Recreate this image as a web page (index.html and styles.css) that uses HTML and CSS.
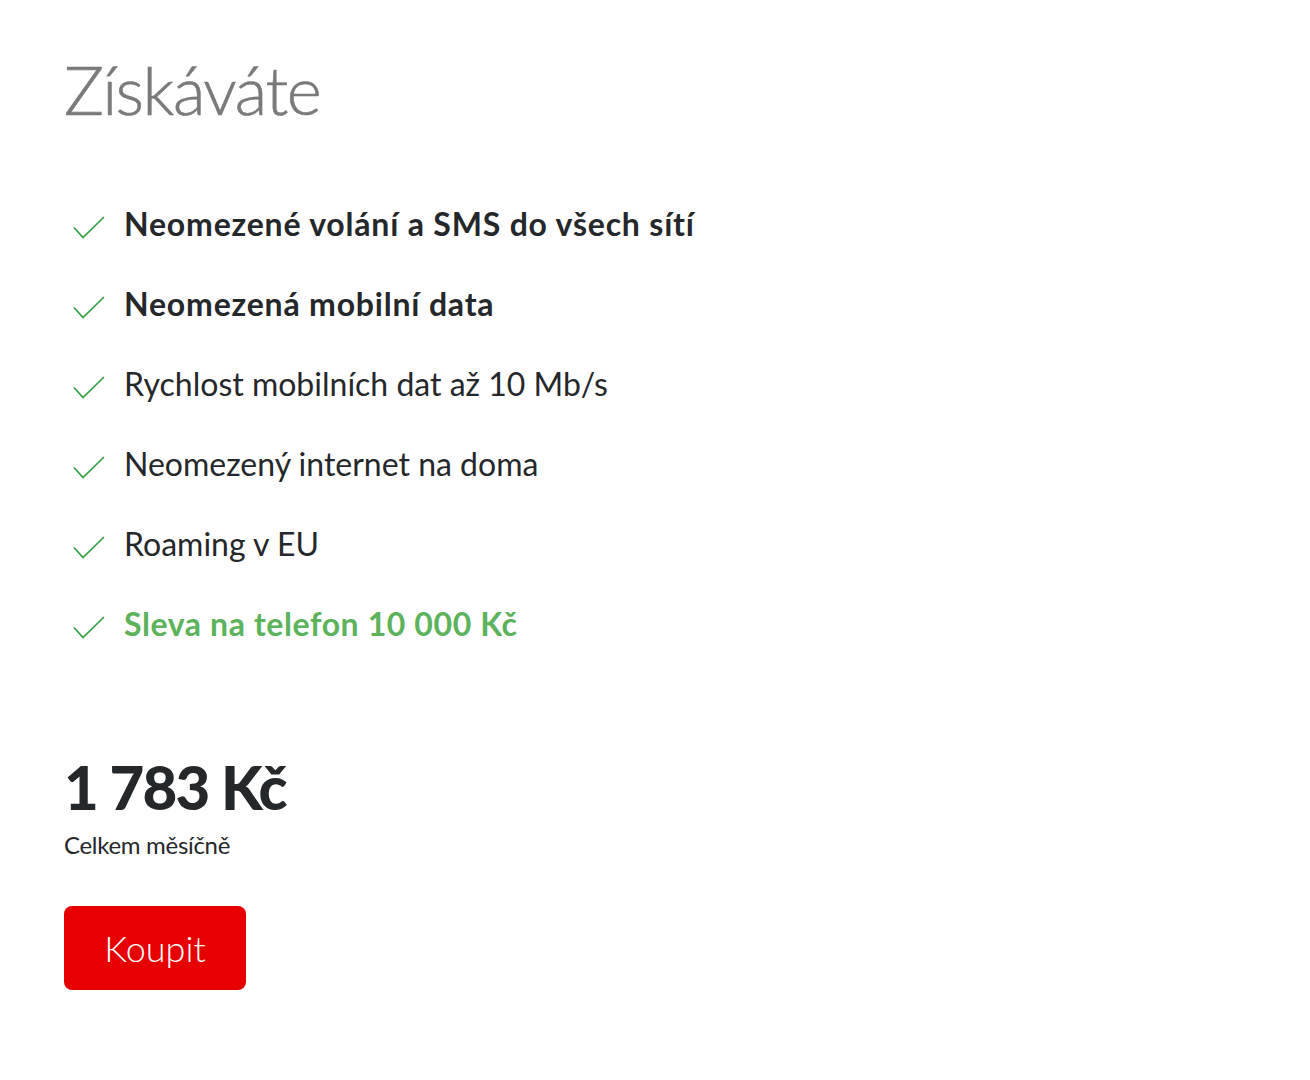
FILE: index.html
```html
<!DOCTYPE html>
<html lang="cs">
<head>
<meta charset="utf-8">
<title>Získáváte</title>
<link rel="stylesheet" href="styles.css">
</head>
<body>
<section class="offer">
  <h1 class="offer-title">Získáváte</h1>
  <ul class="benefits">
    <li class="benefit benefit-strong">
      <svg class="check" viewBox="0 0 32 24" width="32" height="24" aria-hidden="true"><polyline points="1,11.5 10,21.5 31,1" /></svg>
      <span>Neomezené volání a SMS do všech sítí</span>
    </li>
    <li class="benefit benefit-strong">
      <svg class="check" viewBox="0 0 32 24" width="32" height="24" aria-hidden="true"><polyline points="1,11.5 10,21.5 31,1" /></svg>
      <span>Neomezená mobilní data</span>
    </li>
    <li class="benefit">
      <svg class="check" viewBox="0 0 32 24" width="32" height="24" aria-hidden="true"><polyline points="1,11.5 10,21.5 31,1" /></svg>
      <span>Rychlost mobilních dat až 10 Mb/s</span>
    </li>
    <li class="benefit">
      <svg class="check" viewBox="0 0 32 24" width="32" height="24" aria-hidden="true"><polyline points="1,11.5 10,21.5 31,1" /></svg>
      <span>Neomezený internet na doma</span>
    </li>
    <li class="benefit">
      <svg class="check" viewBox="0 0 32 24" width="32" height="24" aria-hidden="true"><polyline points="1,11.5 10,21.5 31,1" /></svg>
      <span>Roaming v EU</span>
    </li>
    <li class="benefit benefit-strong benefit-green">
      <svg class="check" viewBox="0 0 32 24" width="32" height="24" aria-hidden="true"><polyline points="1,11.5 10,21.5 31,1" /></svg>
      <span>Sleva na telefon 10&nbsp;000 Kč</span>
    </li>
  </ul>
  <div class="price">
    <div class="price-value">1&nbsp;783 Kč</div>
    <div class="price-label">Celkem měsíčně</div>
  </div>
  <button class="buy-button" type="button">Koupit</button>
</section>
</body>
</html>
```
FILE: styles.css
```css
html, body {
  margin: 0;
  padding: 0;
  background: #ffffff;
}

body {
  font-family: Lato, "Open Sans", "Liberation Sans", sans-serif;
  color: #25282b;
}

.offer {
  padding: 53px 0 0 64px;
  display: flex;
  flex-direction: column;
  align-items: flex-start;
}

.offer-title {
  margin: 0;
  font-size: 67px;
  font-weight: 300;
  line-height: 72px;
  color: #7a7a7a;
  letter-spacing: -1.5px;
  -webkit-text-stroke: 0.6px #7a7a7a;
}

.benefits {
  list-style: none;
  margin: 79px 0 0 0;
  padding: 0;
  display: flex;
  flex-direction: column;
  gap: 40px;
}

.benefit {
  display: flex;
  align-items: center;
  gap: 19px;
  height: 40px;
  font-size: 32px;
  line-height: 40px;
  font-weight: 400;
  color: #25282b;
}

.benefit-strong {
  font-weight: 700;
  letter-spacing: 0.8px;
}

.benefit-green {
  color: #5cb35c;
  letter-spacing: 0.6px;
}

.check {
  flex: none;
  margin-left: 9px;
  margin-top: 8px;
  width: 32px;
  height: 24px;
  fill: none;
  stroke: #2f9e41;
  stroke-width: 1.6;
}

.price {
  margin-top: 112px;
  display: flex;
  flex-direction: column;
}

.price-value {
  font-size: 60px;
  font-weight: 900;
  line-height: 63px;
  letter-spacing: -1.8px;
  color: #25282b;
}

.price-label {
  margin-top: 12px;
  font-size: 24px;
  line-height: 28px;
  letter-spacing: -0.3px;
  color: #25282b;
}

.buy-button {
  margin-top: 47px;
  width: 182px;
  height: 84px;
  border: none;
  border-radius: 8px;
  background: #e60000;
  color: #ffffff;
  font-family: Lato, "Open Sans", "Liberation Sans", sans-serif;
  font-size: 36px;
  font-weight: 300;
  padding: 0;
  cursor: pointer;
}
```
